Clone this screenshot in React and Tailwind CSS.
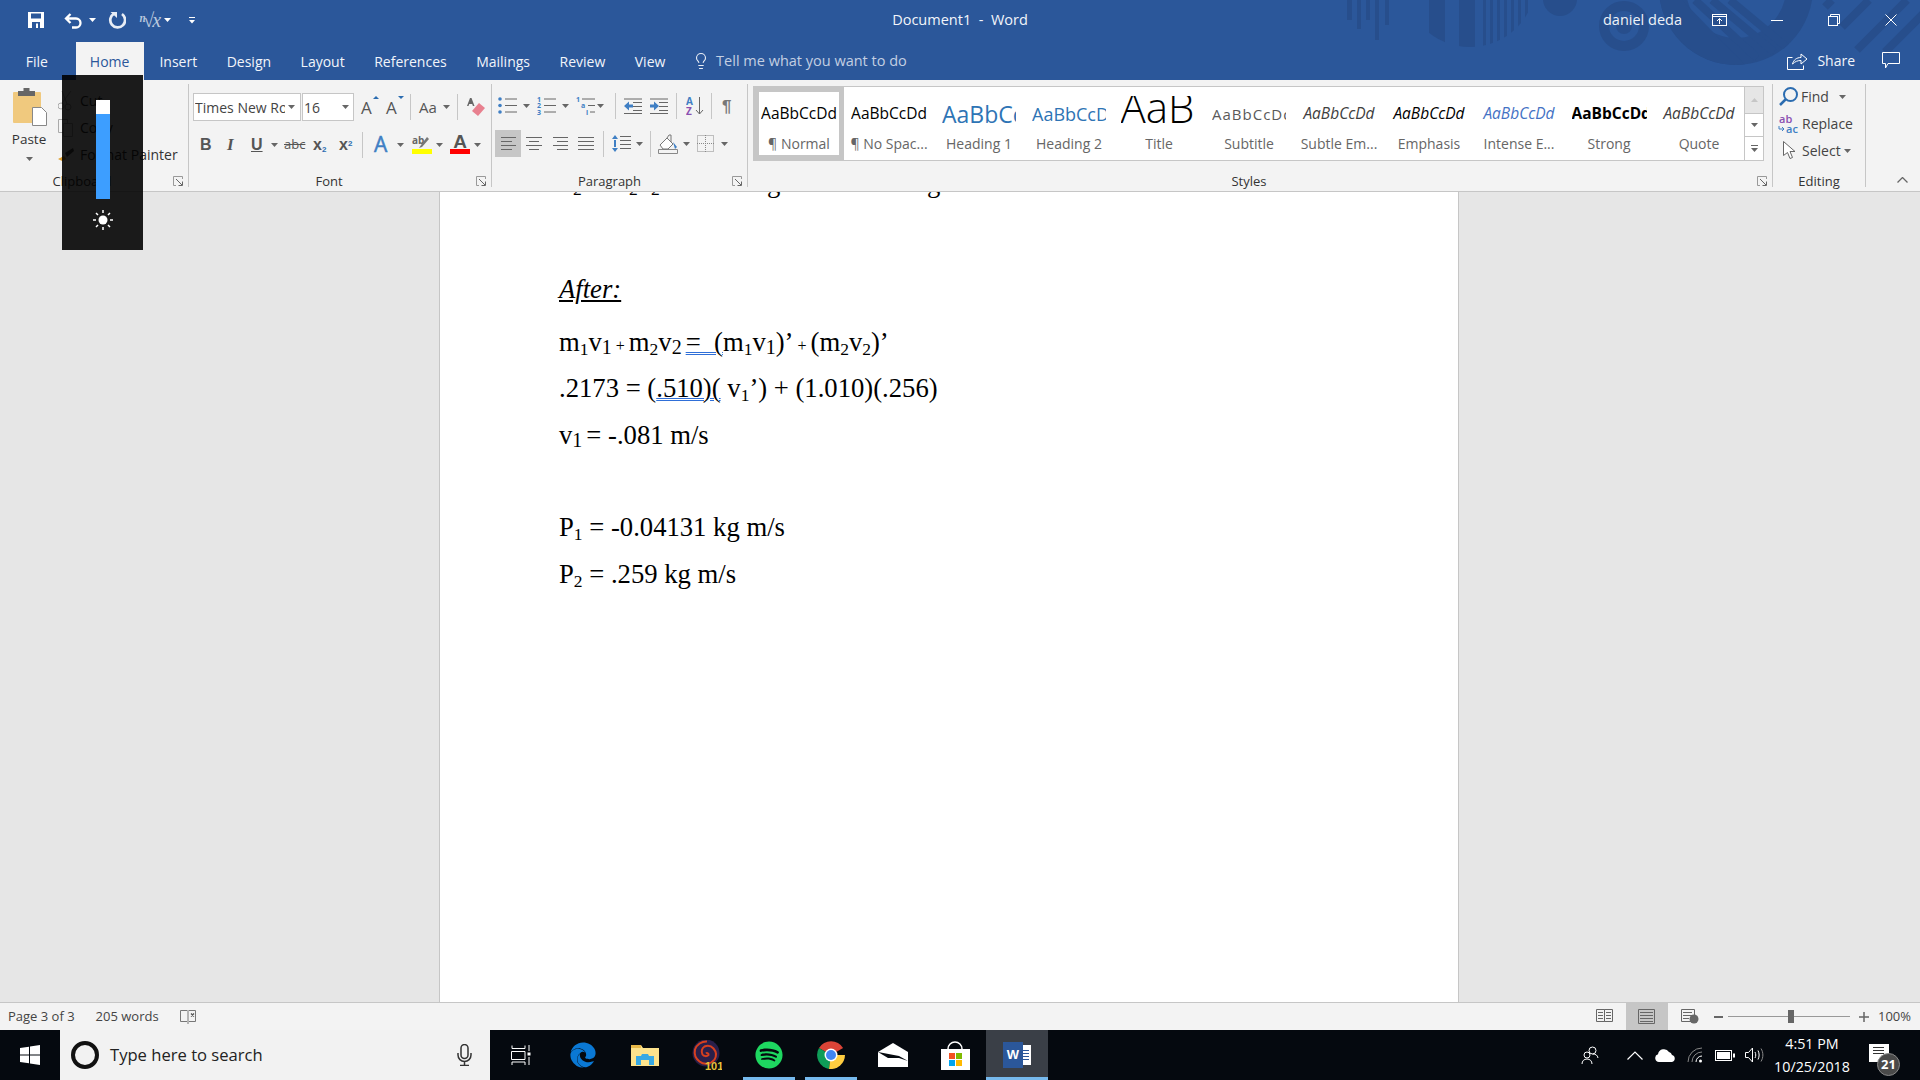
import { Lightbulb } from 'lucide-react';
import { FaEdge, FaSpotify } from 'react-icons/fa';

const Ic = ({ w, h, className = '', children }) => (
  <svg width={w} height={h} viewBox={`0 0 ${w} ${h}`} fill="none" className={`shrink-0 ${className}`}>
    {children}
  </svg>
);

const Caret = ({ className = '', color = '#666' }) => (
  <Ic w={7} h={4} className={className}><path d="M0 0h7L3.5 4z" fill={color} /></Ic>
);

const Sep = ({ className = '' }) => <div className={`w-px h-[26px] bg-[#c6c6c6] shrink-0 ${className}`} />;

const Launcher = () => (
  <Ic w={10} h={10} className="absolute right-[5px] top-[5px]">
    <path d="M9.5 3V.5H.5v9H3" stroke="#999" />
    <path d="M3 3l6 6M9.5 5.5v4h-4" stroke="#666" />
  </Ic>
);

// horizontal rule stack used by the paragraph icons
const Rules = ({ x = 0, lines, color = '#666' }) => (
  <>
    {lines.map(([y, x1, x2], i) => (
      <path key={i} d={`M${x + x1} ${y + 0.5}H${x + x2}`} stroke={color} />
    ))}
  </>
);

function Watermark() {
  const c = '#274e8c';
  return (
    <svg className="absolute left-0 top-0 pointer-events-none" width="1920" height="80" viewBox="0 0 1920 80" fill="none">
      <defs>
        <clipPath id="disc"><circle cx="1470" cy="-19" r="66" /></clipPath>
        <clipPath id="ring"><circle cx="1736" cy="-12" r="77" /></clipPath>
      </defs>
      <g fill={c}>
        <rect x="1347" y="0" width="5" height="20" />
        <rect x="1357" y="0" width="4" height="29" />
        <rect x="1366" y="0" width="4" height="20" />
        <rect x="1375" y="0" width="4" height="40" />
        <rect x="1385" y="0" width="4" height="25" />
        <g clipPath="url(#disc)">
          <rect x="1429" y="0" width="16" height="60" />
          <rect x="1459" y="0" width="16" height="60" />
          <rect x="1483" y="0" width="3" height="60" />
          <rect x="1490" y="0" width="3" height="60" />
          <rect x="1497" y="0" width="3" height="60" />
          <rect x="1504" y="0" width="3" height="60" />
          <rect x="1511" y="0" width="3" height="60" />
          <rect x="1518" y="0" width="3" height="60" />
          <rect x="1525" y="0" width="3" height="60" />
        </g>
        <circle cx="1560" cy="-1" r="17" />
        <circle cx="1624" cy="26" r="8" />
      </g>
      <circle cx="1624" cy="26" r="20" stroke={c} strokeWidth="10" />
      <circle cx="1736" cy="-12" r="63.5" stroke={c} strokeWidth="27" />
      <g clipPath="url(#ring)">
        <path d="M1660 0h22l63 65h-85z" fill={c} />
        <g stroke={c} strokeWidth="8">
          <path d="M1695 0l62 58" />
          <path d="M1712 0l62 52" />
          <path d="M1730 0l60 50" />
        </g>
      </g>
      <g stroke={c} strokeWidth="8">
        <path d="M1825 7l7-7" />
        <path d="M1842 27l27-27" />
        <path d="M1857 50l50-50" />
        <path d="M1885 52l40-40" />
      </g>
    </svg>
  );
}

function TitleBar() {
  return (
    <div className="h-10 grid grid-cols-[1fr_auto_1fr] items-center text-white text-[14.5px] relative">
      <div className="flex items-center pl-[28px]">
        <Ic w={16} h={16}>
          <path d="M0 0h16v16H0z" fill="#fff" />
          <rect x="3" y="1.5" width="10" height="5" fill="#2b579a" />
          <rect x="4" y="10" width="8" height="6" fill="#2b579a" />
          <rect x="8" y="11.5" width="2" height="4.5" fill="#fff" />
        </Ic>
        <Ic w={18} h={17} className="ml-[20px]">
          <path d="M6.5 2L2 6.5 6.5 11M2 6.5h10a4.2 4.2 0 0 1 0 9H8" stroke="#fff" strokeWidth="2.3" />
        </Ic>
        <Caret color="#fff" className="ml-[7px]" />
        <Ic w={18} h={18} className="ml-[12px]">
          <path d="M6 2.6A7.4 7.4 0 1 0 14 3" stroke="#e8edf5" strokeWidth="2.7" />
          <path d="M2.5 1h6.5v6z" fill="#e8edf5" />
        </Ic>
        <span className="ml-[13px] w-[19px] font-['Liberation_Serif'] italic text-[20px] tracking-[-2px] leading-none text-[#b9c7dd] whitespace-nowrap">ⁿ√x</span>
        <Caret color="#fff" className="ml-[6px]" />
        <Ic w={6} h={7} className="ml-[18px]">
          <path d="M0 .5h6" stroke="#fff" /><path d="M0 3h6L3 6.5z" fill="#fff" />
        </Ic>
      </div>
      <span className="text-[#f2f5fa] -mt-[1px]">Document1&nbsp; -&nbsp; Word</span>
      <div className="flex items-center justify-end pr-[23px]">
        <span className="text-[#eef2f8]">daniel deda</span>
        <Ic w={15} h={12} className="ml-[30px]">
          <rect x=".5" y=".5" width="14" height="11" stroke="#fff" />
          <path d="M.5 2.5h14" stroke="#fff" /><path d="M7.5 10V4.5M5 7l2.5-2.5L10 7" stroke="#fff" />
        </Ic>
        <div className="w-[12px] h-px bg-white ml-[44px]" />
        <Ic w={12} h={12} className="ml-[45px]">
          <rect x=".5" y="2.5" width="9" height="9" stroke="#fff" /><path d="M2.5 2.5v-2h9v9h-2" stroke="#fff" />
        </Ic>
        <Ic w={12} h={12} className="ml-[45px]"><path d="M.5.5l11 11M11.5.5l-11 11" stroke="#fff" /></Ic>
      </div>
    </div>
  );
}

function TabRow() {
  const tabs = ['File', 'Home', 'Insert', 'Design', 'Layout', 'References', 'Mailings', 'Review', 'View'];
  return (
    <div className="h-10 flex items-end pl-[11px] text-[14px] relative">
      {tabs.map((t) => (
        <div
          key={t}
          className={t === 'Home'
            ? 'h-[38px] w-[68px] ml-[13px] mr-[1px] flex items-center justify-center bg-[#f3f3f3] text-[#2b579a]'
            : 'h-[38px] px-[14.75px] flex items-center text-[#f2f5fa]'}
        >
          {t}
        </div>
      ))}
      <div className="h-[38px] flex items-center ml-[12px] text-[#c3cfe2] text-[14.5px]">
        <Lightbulb size={18} strokeWidth={1.5} color="#e8edf5" />
        <span className="ml-[6px]">Tell me what you want to do</span>
      </div>
      <div className="h-[38px] flex items-center ml-auto pr-[20px] pb-[2px] text-[#f2f5fa]">
        <Ic w={21} h={19}>
          <path d="M5.5 6.5H.5v12h16v-4" stroke="#fff" />
          <path d="M5.5 13c1-4 4-6.500 8.500-6.500V3l6 5-6 5V9.500c-3.500 0-6 1-8.500 3.500z" stroke="#fff" />
        </Ic>
        <span className="ml-[9px]">Share</span>
        <Ic w={18} h={17} className="ml-[27px]">
          <path d="M.5.5h17v11H6l-2.500 4.500v-4.500h-3z" stroke="#fff" />
        </Ic>
      </div>
    </div>
  );
}

function Clipboard() {
  return (
    <div className="w-[188px] flex flex-col relative">
      <div className="flex-1 flex">
        <div className="w-[58px] flex flex-col items-center pt-[8px]">
          <Ic w={36} h={38} className="ml-[3px]">
            <rect x="0" y="4" width="28" height="31" rx="1" fill="#f0c97e" />
            <path d="M5 8V3h5.500V0h6v3H22v5z" fill="#666" />
            <path d="M19.500 19.500h9l5 5v13h-14z" fill="#fff" stroke="#888" />
          </Ic>
          <span className="text-[13.5px] text-[#333] leading-[18px] mt-[4px]">Paste</span>
          <Caret className="mt-[9px]" />
        </div>
        <div className="flex flex-col text-[14px] text-[#333]">
          <div className="h-[27px] mt-[7px] flex items-center">
            <Ic w={16} h={20}><circle cx="3" cy="15" r="3" stroke="#aaa" /><circle cx="10" cy="16" r="3" stroke="#aaa" /><path d="M4 12L13 0M9 13L4 0" stroke="#aaa" /></Ic>
            <span className="ml-[6px]">Cut</span>
          </div>
          <div className="h-[27px] flex items-center">
            <Ic w={16} h={18}><path d="M.5.5h9v13h-9z" stroke="#aaa" /><path d="M5.500 4.500h9v13h-9z" fill="#f3f3f3" stroke="#aaa" /></Ic>
            <span className="ml-[6px]">Copy</span>
          </div>
          <div className="h-[27px] flex items-center">
            <Ic w={16} h={14}><path d="M0 11l6-3 2 3-4 2z" fill="#e0a030" /><path d="M7 5l8-5 1 3-7 6z" fill="#555" /></Ic>
            <span className="ml-[6px]">Format Painter</span>
          </div>
        </div>
      </div>
      <div className="h-[20px] text-center pr-[24px] text-[13px] text-[#333] leading-[20px] relative">
        Clipboard
        <Launcher />
      </div>
    </div>
  );
}

function FontGroup() {
  return (
    <div className="w-[303px] flex flex-col border-l border-[#c6c6c6] mt-[4px] mb-[4px] relative">
      <div className="h-[28px] mt-[9px] flex items-center pl-[4px]">
        <div className="w-[108px] h-[28px] border border-[#c6c6c6] bg-white flex items-center pl-px pr-[5px]">
          <span className="flex-1 overflow-hidden whitespace-nowrap text-[14px] text-[#444]">Times New Roman</span>
          <Caret className="ml-[3px]" />
        </div>
        <div className="w-[52px] h-[28px] ml-px border border-[#c6c6c6] bg-white flex items-center pl-px pr-[4px] justify-between text-[14px] text-[#444]">
          16<Caret />
        </div>
        <div className="relative w-[15px] ml-[7px] text-[17px] text-[#555] leading-none font-medium">
          A<Ic w={6} h={3} className="absolute right-[-3px] top-[-3px]"><path d="M0 3l3-3 3 3z" fill="#2b6cb0" /></Ic>
        </div>
        <div className="relative w-[15px] ml-[10px] text-[17px] text-[#555] leading-none font-medium">
          A<Ic w={6} h={3} className="absolute right-[-3px] top-[-3px]"><path d="M0 0h6L3 3z" fill="#2b6cb0" /></Ic>
        </div>
        <Sep className="ml-[9px]" />
        <span className="ml-[8px] text-[15px] text-[#555] w-[24px]">Aa</span>
        <Caret />
        <Sep className="ml-[7px]" />
        <Ic w={19} h={20} className="ml-[9px]">
          <path d="M3 1L0 9h1.500l.700-2h3l.700 2H7.500L4.500 1z" fill="#666" />
          <path d="M12 6l6 5-7 8-6-5z" fill="#e8808f" />
        </Ic>
      </div>
      <div className="h-[27px] mt-[10px] flex items-center text-[#555] font-bold text-[16px] leading-none">
        <span className="w-[12px] ml-[11px] font-['Liberation_Sans']">B</span>
        <span className="w-[12px] ml-[15px] font-['Liberation_Serif'] italic text-[17px]">I</span>
        <span className="w-[12px] ml-[12px] underline font-['Liberation_Sans']">U</span>
        <Caret className="ml-[8px]" />
        <span className="ml-[6px] text-[13px] font-normal line-through w-[21px]">abc</span>
        <span className="ml-[8px] w-[17px] font-['Liberation_Sans']">x<sub className="text-[8px] text-[#2b6cb0]">2</sub></span>
        <span className="ml-[9px] w-[16px] font-['Liberation_Sans']">x<sup className="text-[8px] text-[#2b6cb0]">2</sup></span>
        <Sep className="ml-[7px]" />
        <span className="ml-[11px] w-[19px] text-[21px] font-normal text-[#3f7fc4] [-webkit-text-stroke:0.5px_#3f7fc4]">A</span>
        <Caret className="ml-[4px]" />
        <div className="ml-[8px] w-[20px] flex flex-col items-center">
          <Ic w={20} h={14}>
            <text x="0" y="9" fontSize="10" fill="#666" fontFamily="Open Sans">ab</text>
            <path d="M7 13l2-3 6-8 2 2-7 8z" fill="#777" />
          </Ic>
          <div className="h-[5px] w-[20px] bg-[#ffff00]" />
        </div>
        <Caret className="ml-[4px]" />
        <div className="ml-[7px] w-[20px] flex flex-col items-center">
          <span className="text-[19px] font-['Liberation_Sans'] leading-[14px] h-[14px]">A</span>
          <div className="h-[5px] w-[20px] bg-[#ff0000]" />
        </div>
        <Caret className="ml-[4px]" />
      </div>
      <div className="mt-auto -mb-[4px] h-[20px] pr-[22px] text-center text-[13px] text-[#333] leading-[20px] relative">
        Font
        <Launcher />
      </div>
    </div>
  );
}

function ParagraphGroup() {
  return (
    <div className="w-[256px] flex flex-col border-l border-[#c6c6c6] mt-[4px] mb-[4px] relative">
      <div className="h-[26px] mt-[9px] flex items-center pl-[6px]">
        <Ic w={19} h={18}>
          <circle cx="2" cy="2" r="1.800" fill="#3f7fc4" /><circle cx="2" cy="8.500" r="1.800" fill="#3f7fc4" /><circle cx="2" cy="15" r="1.800" fill="#3f7fc4" />
          <Rules lines={[[1.500, 7, 19], [8, 7, 19], [14.500, 7, 19]]} />
        </Ic>
        <Caret className="ml-[6px]" />
        <Ic w={19} h={18} className="ml-[7px]">
          <g fill="#3f7fc4" fontSize="7" fontWeight="700" fontFamily="Open Sans"><text x="0" y="5">1</text><text x="0" y="11">2</text><text x="0" y="18">3</text></g>
          <Rules lines={[[1.500, 7, 19], [8, 7, 19], [14.500, 7, 19]]} />
        </Ic>
        <Caret className="ml-[6px]" />
        <Ic w={19} h={18} className="ml-[7px]">
          <g fontSize="7" fontWeight="700" fontFamily="Open Sans"><text x="0" y="5" fill="#3f7fc4">1</text><text x="5" y="11" fill="#3f7fc4">a</text><text x="10" y="18" fill="#3f7fc4">i</text></g>
          <Rules lines={[[1.500, 6, 19], [8, 12, 19], [14.500, 14, 19]]} />
        </Ic>
        <Caret className="ml-[2px]" />
        <Sep className="ml-[11px]" />
        <Ic w={18} h={16} className="ml-[8px]">
          <Rules lines={[[.500, 0, 18], [4, 9, 18], [8, 9, 18], [12, 9, 18], [15, 0, 18]]} />
          <path d="M0 8l5-4.500V6.500h4v3H5v3z" fill="#3f7fc4" />
        </Ic>
        <Ic w={18} h={16} className="ml-[8px]">
          <Rules lines={[[.500, 0, 18], [4, 9, 18], [8, 9, 18], [12, 9, 18], [15, 0, 18]]} />
          <path d="M9 8L4 3.500V6.500H0v3h4v3z" fill="#3f7fc4" />
        </Ic>
        <Sep className="ml-[8px]" />
        <Ic w={18} h={20} className="ml-[9px]">
          <text x="0" y="9" fontSize="10" fontWeight="700" fill="#3f7fc4" fontFamily="Open Sans">A</text>
          <text x="0" y="19" fontSize="10" fontWeight="700" fill="#8a4fb0" fontFamily="Open Sans">Z</text>
          <path d="M13.500 1v17M10 14l3.500 4 3.500-4" stroke="#666" />
        </Ic>
        <Sep className="ml-[7px]" />
        <span className="ml-[10px] font-['Liberation_Sans'] text-[17px] font-bold text-[#777] leading-none">¶</span>
      </div>
      <div className="h-[27px] mt-[11px] flex items-center pl-[3px]">
        <div className="w-[26px] h-[27px] bg-[#c6c6c6] flex items-center justify-center">
          <Ic w={15} h={13}><Rules lines={[[0, 0, 15], [4, 0, 11], [8, 0, 15], [12, 0, 11]]} /></Ic>
        </div>
        <Ic w={16} h={13} className="ml-[5px]"><Rules lines={[[0, 0, 16], [4, 3, 13], [8, 0, 16], [12, 3, 13]]} /></Ic>
        <Ic w={15} h={13} className="ml-[11px]"><Rules lines={[[0, 0, 15], [4, 4, 15], [8, 0, 15], [12, 4, 15]]} /></Ic>
        <Ic w={16} h={13} className="ml-[10px]"><Rules lines={[[0, 0, 16], [4, 0, 16], [8, 0, 16], [12, 0, 16]]} /></Ic>
        <Sep className="ml-[9px]" />
        <Ic w={19} h={19} className="ml-[8px]">
          <path d="M3 6V13" stroke="#3f7fc4" strokeWidth="2" /><path d="M0 5l3-4 3 4zM0 14l3 4 3-4z" fill="#3f7fc4" />
          <Rules lines={[[2, 8, 19], [6, 8, 19], [10, 8, 19], [14, 8, 19]]} />
        </Ic>
        <Caret className="ml-[5px]" />
        <Sep className="ml-[7px]" />
        <Ic w={20} h={20} className="ml-[7px]">
          <path d="M.5 15.500h19v4H.5z" stroke="#888" />
          <path d="M2 11l7-7 6 6-5 5H5z" stroke="#777" fill="#fff" /><path d="M9 4l2-3h2v7" stroke="#777" />
          <path d="M15 8l4 5-2 2z" fill="#3f7fc4" />
        </Ic>
        <Caret className="ml-[5px]" />
        <Ic w={17} h={17} className="ml-[7px]">
          <path d="M.5.500h16v16H.5z" stroke="#888" strokeDasharray="1 1" /><path d="M8.500 0v17M0 8.500h17" stroke="#888" strokeDasharray="1 1" />
        </Ic>
        <Caret className="ml-[7px]" />
      </div>
      <div className="mt-auto -mb-[4px] h-[20px] pr-[20px] text-center text-[13px] text-[#333] leading-[20px] relative">
        Paragraph
        <Launcher />
      </div>
    </div>
  );
}

const styleItems = [
  { label: '¶ Normal', preview: 'AaBbCcDd', cls: 'text-[15.5px] text-black', boxed: true },
  { label: '¶ No Spac...', preview: 'AaBbCcDd', cls: 'text-[15.5px] text-black' },
  { label: 'Heading 1', preview: 'AaBbCcDd', cls: 'text-[23px] text-[#2e74b5] w-[74px] text-left' },
  { label: 'Heading 2', preview: 'AaBbCcDd', cls: 'text-[18px] text-[#2e74b5] w-[74px] text-left' },
  { label: 'Title', preview: 'AaB', cls: 'text-[42px] text-black w-[74px] h-[30px] mb-[6px] mr-[3px] font-light leading-[21px]' },
  { label: 'Subtitle', preview: 'AaBbCcDd', cls: 'text-[15px] text-[#5a5a5a] tracking-[1px] w-[74px] text-left' },
  { label: 'Subtle Em...', preview: 'AaBbCcDd', cls: 'text-[15.5px] italic text-[#404040] w-[78px]' },
  { label: 'Emphasis', preview: 'AaBbCcDd', cls: 'text-[15.5px] italic text-black w-[78px]' },
  { label: 'Intense E...', preview: 'AaBbCcDd', cls: 'text-[15.5px] italic text-[#4472c4] w-[78px]' },
  { label: 'Strong', preview: 'AaBbCcDd', cls: 'text-[15.5px] font-bold text-black w-[75px] text-left' },
  { label: 'Quote', preview: 'AaBbCcDd', cls: 'text-[15.5px] italic text-[#404040] w-[78px]' },
];

function StylesGroup() {
  return (
    <div className="w-[1025px] flex flex-col border-l border-[#c6c6c6] mt-[4px] mb-[4px] relative">
      <div className="ml-[5px] mt-[2px] w-[1011px] h-[75px] border border-[#c6c6c6] bg-white flex">
        {styleItems.map((s) => (
          <div
            key={s.label}
            className={`w-[90px] h-[73px] flex flex-col items-center shrink-0 ${s.boxed ? 'border-[5px] border-[#c6c6c6] pt-px' : 'pt-[6px]'}`}
          >
            <div className="h-[42px] w-[80px] shrink-0 flex items-center justify-center overflow-hidden">
              <span className={`whitespace-nowrap overflow-hidden text-center ${s.cls}`}>{s.preview}</span>
            </div>
            <span className="text-[14px] leading-[18px] text-[#666] whitespace-nowrap">{s.label}</span>
          </div>
        ))}
        <div className="w-[19px] ml-auto border-l border-[#c6c6c6] flex flex-col">
          <div className="h-[26px] bg-[#e6e6e6] flex items-center justify-center"><Ic w={7} h={4}><path d="M0 4h7L3.500 0z" fill="#c6c6c6" /></Ic></div>
          <div className="h-[24px] border-y border-[#c6c6c6] flex items-center justify-center"><Caret /></div>
          <div className="flex-1 flex flex-col items-center justify-center gap-[2px]"><div className="w-[7px] h-px bg-[#666]" /><Caret /></div>
        </div>
      </div>
      <div className="mt-auto -mb-[4px] h-[20px] pr-[22px] text-center text-[13px] text-[#333] leading-[20px] relative">
        Styles
        <Launcher />
      </div>
    </div>
  );
}

function EditingGroup() {
  return (
    <div className="w-[94px] flex flex-col border-x border-[#c6c6c6] mt-[4px] mb-[4px] text-[14px] text-[#444] leading-none">
      <div className="h-[27px] pl-[6px] flex items-center -mt-px">
        <Ic w={19} h={19}><circle cx="11.500" cy="7.500" r="6.500" stroke="#2b6cb0" strokeWidth="2" /><path d="M7 12l-6 6" stroke="#2b6cb0" strokeWidth="2.500" /></Ic>
        <span className="ml-[3px] w-[38px]">Find</span>
        <Caret />
      </div>
      <div className="h-[27px] pl-[5px] flex items-center">
        <Ic w={21} h={20}>
          <text x="1" y="9" fontSize="11" fontWeight="600" fill="#8a4fb0" fontFamily="Open Sans">ab</text>
          <text x="8" y="19" fontSize="11" fontWeight="600" fill="#3f7fc4" fontFamily="Open Sans">ac</text>
          <path d="M1 12v3h5M4 13l2 2-2 2" stroke="#3f7fc4" />
        </Ic>
        <span className="ml-[3px]">Replace</span>
      </div>
      <div className="h-[27px] pl-[10px] flex items-center">
        <Ic w={13} h={19}><path d="M.5.500v14l4-3 2.500 6 2.500-1-2.500-6h5z" stroke="#666" fill="#fff" /></Ic>
        <span className="ml-[6px]">Select</span>
        <Caret className="ml-[3px]" />
      </div>
      <div className="mt-auto -mb-[4px] h-[20px] text-center text-[13px] text-[#333] leading-[20px]">Editing</div>
    </div>
  );
}

function Ribbon() {
  return (
    <div className="h-[112px] bg-[#f3f3f3] border-b border-[#c6c6c6] flex shrink-0 relative">
      <Clipboard />
      <FontGroup />
      <ParagraphGroup />
      <StylesGroup />
      <EditingGroup />
      <div className="flex-1 flex items-end justify-end pr-[12px] pb-[8px]">
        <Ic w={11} h={6}><path d="M.5 5.500l5-5 5 5" stroke="#666" strokeWidth="1.300" /></Ic>
      </div>
    </div>
  );
}

const S = ({ children }) => <sub className="text-[17.5px] align-baseline relative top-[4px] bottom-auto">{children}</sub>;
const T = ({ children }) => <sub className="text-[20px] align-baseline relative top-[3px] bottom-auto">{children}</sub>;

function Page() {
  return (
    <div className="w-[1020px] ml-[439px] h-full bg-white border-x border-[#c6c6c6] overflow-hidden font-['Liberation_Serif'] text-[26.67px] text-black">
      {/* tail of the line hidden behind the ribbon */}
      <div className="h-[6px] overflow-hidden relative">
        <span className="absolute left-[133px] -top-[13px] text-[17.5px] leading-[20px]">2</span>
        <span className="absolute left-[189px] -top-[13px] text-[17.5px] leading-[20px]">2</span>
        <span className="absolute left-[211px] -top-[13px] text-[17.5px] leading-[20px]">2</span>
        <span className="absolute left-[327px] -top-[24px] leading-[30px]">g</span>
        <span className="absolute left-[487px] -top-[24px] leading-[30px]">g</span>
      </div>
      <div className="pl-[119px] pt-[68px] whitespace-pre">
        <div className="h-[53px] leading-[46px] italic underline">After:</div>
        <div className="h-[46px] leading-[46px]">
          m<S>1</S>v<T>1</T><span className="text-[16px]"> + </span>m<S>2</S>v<T>2</T><span className="text-[16px]"> </span>
          <span className="underline decoration-double decoration-[#2f6fd8] decoration-1">{'=  ('}</span>m<S>1</S>v<T>1</T>)’<span className="text-[16px]"> + </span>(m<S>2</S>v<S>2</S>)’
        </div>
        <div className="h-[47px] leading-[46px]">
          .2173 = (<span className="underline decoration-double decoration-[#2f6fd8] decoration-1">.510)(</span> v<S>1</S>’) + (1.010)(.256)
        </div>
        <div className="h-[92px] leading-[46px]">v<T>1</T><span className="text-[16px]"> </span>= -.081 m/s</div>
        <div className="h-[47px] leading-[46px]">P<S>1</S> = -0.04131 kg m/s</div>
        <div className="h-[46px] leading-[46px]">P<S>2</S> = .259 kg m/s</div>
      </div>
    </div>
  );
}

function StatusBar() {
  return (
    <div className="h-[28px] bg-[#f3f3f3] border-t border-[#c6c6c6] flex items-center pl-[8px] text-[13px] text-[#444] shrink-0">
      <span>Page 3 of 3</span>
      <span className="ml-[21px]">205 words</span>
      <Ic w={16} h={14} className="ml-[21px]">
        <path d="M7 .5H.5v11H7M9 .5h6.500v11H9M8 0v14" stroke="#777" />
        <path d="M11 3.500l3 3M14 3.500l-3 3" stroke="#555" strokeWidth="1.300" />
      </Ic>
      <div className="ml-auto flex items-center h-full pr-[9px]">
        <Ic w={17} h={15}>
          <path d="M.5.500H8.500v12H.5zM8.500.500h8v12h-8z" stroke="#666" />
          <Rules lines={[[3, 2, 7], [6, 2, 7], [9, 2, 7]]} /><Rules lines={[[3, 10, 15], [6, 10, 15], [9, 10, 15]]} />
        </Ic>
        <div className="w-[42px] h-full bg-[#c6c6c6] ml-[13px] flex items-center justify-center">
          <Ic w={17} h={15}><path d="M.5.500h16v14H.5z" stroke="#666" /><Rules lines={[[3, 2, 15], [6, 2, 15], [9, 2, 15], [12, 2, 15]]} /></Ic>
        </div>
        <Ic w={18} h={15} className="ml-[13px]">
          <path d="M.5.500h13v12H.5z" stroke="#666" /><Rules lines={[[3, 2, 11], [6, 2, 11], [9, 2, 8]]} />
          <circle cx="13" cy="10" r="4.500" fill="#666" />
        </Ic>
        <div className="w-[9px] h-[2px] bg-[#666] ml-[15px]" />
        <div className="w-[122px] h-px bg-[#999] ml-[5px] relative">
          <div className="absolute left-[60px] -top-[6px] w-[6px] h-[13px] bg-[#666]" />
        </div>
        <Ic w={10} h={10} className="ml-[9px]"><path d="M5 0v10M0 5h10" stroke="#666" strokeWidth="1.500" /></Ic>
        <span className="ml-[9px]">100%</span>
      </div>
    </div>
  );
}

const Slot = ({ bar, active, children }) => (
  <div className={`w-[62px] h-full flex items-center justify-center shrink-0 relative ${active ? 'bg-[#3a3f47]' : ''}`}>
    {children}
    {bar && <div className={`absolute bottom-0 h-[3px] bg-[#76b9ed] ${active ? 'inset-x-0' : 'inset-x-[5px]'}`} />}
  </div>
);

function Taskbar() {
  return (
    <div className="h-[50px] bg-[#05090f] flex items-center shrink-0 text-white">
      <div className="w-[60px] flex items-center justify-center">
        <Ic w={20} h={20}><path d="M0 3l9-1.300V9.500H0zM10 1.500L20 0v9.500H10zM0 10.500h9v7.800l-9-1.300zM10 10.500h10V20l-10-1.500z" fill="#fff" /></Ic>
      </div>
      <div className="w-[430px] h-full bg-[#f2f2f2] flex items-center pl-[11px] pr-[18px]">
        <div className="w-[28px] h-[28px] rounded-full border-[4px] border-[#111]" />
        <span className="ml-[11px] text-[16.6px] text-[#222]">Type here to search</span>
        <Ic w={15} h={22} className="ml-auto">
          <rect x="4" y=".5" width="7" height="14" rx="3.500" stroke="#333" strokeWidth="1.500" />
          <path d="M1 9v2a6.500 6.500 0 0 0 13 0V9M7.500 18v3M3 21.500h9" stroke="#333" strokeWidth="1.500" />
        </Ic>
      </div>
      <div className="w-[62px] flex items-center justify-center">
        <Ic w={20} h={20}>
          <path d="M1 .5v3h13v-3M.5 6.500h13.500v8H.5zM1 20v-3h13v3M18 0v6M18 12v8" stroke="#fff" />
          <rect x="16.500" y="7.500" width="3" height="3" fill="#fff" />
        </Ic>
      </div>
      <Slot><FaEdge size={26} color="#0a78d4" /></Slot>
      <Slot>
        <Ic w={28} h={24}>
          <path d="M0 2h10l2 3h16v18H0z" fill="#fde38c" />
          <path d="M0 2h10v3H0z" fill="#e9b949" />
          <path d="M5 22v-9h5l1-2h6l1 2h5v9h-5v-5H10v5z" fill="#38a9e4" />
        </Ic>
      </Slot>
      <Slot>
        <Ic w={30} h={30}>
          <circle cx="14" cy="13" r="13.500" fill="#2a1f4a" />
          <path d="M14 13.500a1.500 1.500 0 0 1 2.500 1.500 4 4 0 0 1-6-.5 6 6 0 0 1 2-8 8 8 0 0 1 9 2 9.500 9.500 0 0 1 1 11 10.500 10.500 0 0 1-15 2 12 12 0 0 1-4.500-12 12 12 0 0 1 12-8" stroke="#d8401f" strokeWidth="2" />
          <text x="13" y="29.500" fontSize="11" fontWeight="700" fill="#e8c23a" fontFamily="Liberation Sans">101</text>
        </Ic>
      </Slot>
      <Slot bar><FaSpotify size={28} color="#1ed760" /></Slot>
      <Slot bar>
        <Ic w={28} h={28}>
          <path d="M14 14L2 7a14 14 0 0 1 24.100 0z" fill="#db4437" />
          <path d="M14 14L2 7a14 14 0 0 0 10 20.900z" fill="#0f9d58" />
          <path d="M14 14h14a14 14 0 0 1-16 13.900z" fill="#ffcd40" />
          <circle cx="14" cy="14" r="6.500" fill="#fff" /><circle cx="14" cy="14" r="5" fill="#4285f4" />
        </Ic>
      </Slot>
      <Slot>
        <Ic w={30} h={24}>
          <path d="M0 9L15 0l15 9v15H0z" fill="#fff" />
          <path d="M0 9l21 4 9 5-9-3-11 0z" fill="#05090f" />
        </Ic>
      </Slot>
      <Slot>
        <Ic w={29} h={29}>
          <path d="M7 8a7 7 0 0 1 14 0" stroke="#fff" strokeWidth="1.500" />
          <path d="M0 8h29v21H0z" fill="#fff" />
          <rect x="8" y="12" width="6" height="6" fill="#f25022" /><rect x="15" y="12" width="6" height="6" fill="#7fba00" />
          <rect x="8" y="19" width="6" height="6" fill="#00a4ef" /><rect x="15" y="19" width="6" height="6" fill="#ffb900" />
        </Ic>
      </Slot>
      <Slot bar active>
        <div className="relative w-[28px] h-[26px]">
          <div className="absolute right-0 top-[3px] w-[14px] h-[20px] bg-white flex flex-col justify-center gap-[2px] pl-[4px]">
            <div className="h-px w-[8px] bg-[#2b579a]" /><div className="h-px w-[8px] bg-[#2b579a]" /><div className="h-px w-[8px] bg-[#2b579a]" /><div className="h-px w-[8px] bg-[#2b579a]" />
          </div>
          <div className="absolute left-0 top-0 w-[20px] h-[26px] bg-[#2b579a] flex items-center justify-center font-['Liberation_Sans'] font-bold text-[13px] text-white">W</div>
        </div>
      </Slot>
      <div className="ml-auto flex items-center pr-[16px]">
        <div className="w-[40px] flex justify-center">
          <Ic w={18} h={18}>
            <circle cx="11.500" cy="4.500" r="3.500" stroke="#fff" /><path d="M17 12c-.5-3-2.500-4-5.500-4" stroke="#fff" />
            <circle cx="6" cy="9" r="3" stroke="#fff" /><path d="M1 18c0-3 2-5 5-5s5 2 5 5" stroke="#fff" />
          </Ic>
        </div>
        <div className="w-[10px]" />
        <div className="w-[30px] flex justify-center"><Ic w={16} h={9}><path d="M.5 8.500L8 1l7.500 7.500" stroke="#fff" strokeWidth="1.200" /></Ic></div>
        <div className="w-[30px] flex justify-center">
          <Ic w={21} h={13}><path d="M4 13a4 4 0 0 1-1-7.800A6 6 0 0 1 14 3a4.500 4.500 0 0 1 3 3 3.600 3.600 0 0 1 0 7z" fill="#fff" /></Ic>
        </div>
        <div className="w-[30px] flex justify-center">
          <Ic w={16} h={16}>
            <path d="M1 15A14 14 0 0 1 15 1M5 15a10 10 0 0 1 10-10" stroke="#888" /><path d="M9 15a6 6 0 0 1 6-6" stroke="#fff" />
            <circle cx="13.500" cy="14" r="1.500" fill="#fff" />
          </Ic>
        </div>
        <div className="w-[30px] flex justify-center">
          <Ic w={20} h={11}><rect x=".5" y=".5" width="16" height="10" stroke="#fff" /><rect x="2" y="2" width="13" height="7" fill="#fff" /><rect x="18" y="3.500" width="2" height="4" fill="#fff" /></Ic>
        </div>
        <div className="w-[30px] flex justify-center">
          <Ic w={20} h={16}>
            <path d="M.5 5.500h3l4-4.500v14l-4-4.500h-3z" stroke="#fff" />
            <path d="M10 5c1 2 1 4 0 6M13 3.500c1.500 3 1.500 6 0 9" stroke="#fff" /><path d="M16 1.500c2.500 4 2.500 9 0 13" stroke="#888" />
          </Ic>
        </div>
        <div className="w-[84px] flex flex-col items-center text-[14.3px] leading-[23px]">
          <span>4:51 PM</span>
          <span>10/25/2018</span>
        </div>
        <div className="w-[50px] flex justify-center pl-[1px]">
          <div className="relative w-[20px] h-[18px] bg-white flex flex-col gap-[2px] pt-[3px] pl-[4px] -mt-[4px] -ml-[1px]">
            <div className="w-[11px] h-px bg-[#333]" /><div className="w-[11px] h-px bg-[#333]" /><div className="w-[11px] h-px bg-[#333]" />
            <div className="absolute left-[8px] top-[9px] w-[23px] h-[23px] rounded-full bg-[#4a4a4a] border border-[#888] flex items-center justify-center text-[13px] font-bold text-white">21</div>
          </div>
        </div>
      </div>
    </div>
  );
}

export default function App() {
  return (
    <div className="w-[1920px] h-[1080px] overflow-hidden flex flex-col relative bg-[#e6e6e6] font-['Open_Sans',sans-serif]">
      <div className="bg-[#2b579a] relative shrink-0">
        <Watermark />
        <TitleBar />
        <TabRow />
      </div>
      <Ribbon />
      <div className="flex-1 min-h-0">
        <Page />
      </div>
      <StatusBar />
      <Taskbar />

      {/* brightness flyout */}
      <div className="absolute left-[62px] top-[75px] w-[81px] h-[175px] bg-black/89 flex flex-col items-center pt-[25px]">
        <div className="w-[14px] h-[99px] bg-[#3d9eff]">
          <div className="w-[14px] h-[14px] bg-white" />
        </div>
        <Ic w={20} h={20} className="mt-[11px]">
          <circle cx="10" cy="10" r="4.500" fill="#fff" />
          <path d="M10 0v3M10 17v3M0 10h3M17 10h3M3 3l2 2M15 15l2 2M17 3l-2 2M3 17l2-2" stroke="#fff" strokeWidth="1.500" />
        </Ic>
      </div>
    </div>
  );
}
